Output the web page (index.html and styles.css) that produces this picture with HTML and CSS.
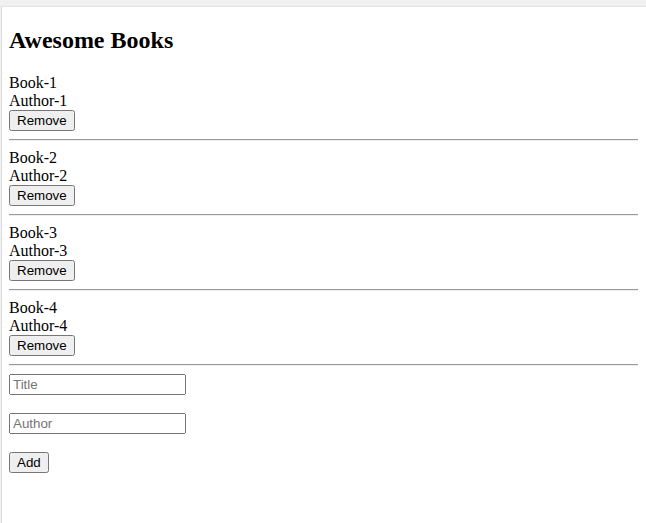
FILE: index.html
```html
<!DOCTYPE html>
<html lang="en">
<head>
<meta charset="utf-8">
<title>Awesome Books</title>
<link rel="stylesheet" href="styles.css">
</head>
<body>
<div class="chrome-bar"></div>
<div class="frame">
  <section class="books">
    <h1 class="title">Awesome Books</h1>
    <div class="list">
      <div class="book">
        <div class="book-title">Book-1</div>
        <div class="book-author">Author-1</div>
        <button class="btn" type="button">Remove</button>
        <hr class="sep">
      </div>
      <div class="book">
        <div class="book-title">Book-2</div>
        <div class="book-author">Author-2</div>
        <button class="btn" type="button">Remove</button>
        <hr class="sep">
      </div>
      <div class="book">
        <div class="book-title">Book-3</div>
        <div class="book-author">Author-3</div>
        <button class="btn" type="button">Remove</button>
        <hr class="sep">
      </div>
      <div class="book">
        <div class="book-title">Book-4</div>
        <div class="book-author">Author-4</div>
        <button class="btn" type="button">Remove</button>
        <hr class="sep">
      </div>
    </div>
    <form class="add-form">
      <input class="field" type="text" placeholder="Title"><br><br>
      <input class="field" type="text" placeholder="Author"><br><br>
      <button class="btn" type="button">Add</button>
    </form>
  </section>
</div>
</body>
</html>
```
FILE: styles.css
```css
html, body {
  margin: 0;
  padding: 0;
  height: 100%;
}
body {
  background: #f1f1f1;
  font-family: "Liberation Serif", "Times New Roman", serif;
  font-size: 16px;
  color: #000;
  display: flex;
  flex-direction: column;
}
.chrome-bar {
  height: 6px;
  background: #f1f1f1;
}
.frame {
  flex: 1;
  background: #fff;
  border-top: 1px solid #e3e3e3;
  border-left: 1px solid #dcdcdc;
  margin-left: 1px;
  padding: 0 8px 8px 7px;
}
.title {
  font-size: 24px;
  font-weight: bold;
  margin: 19.92px 0;
}
.sep {
  margin: 8px 0;
  border: 0;
  border-top: 1px solid #9a9a9a;
  border-bottom: 1px solid #eeeeee;
  height: 0;
}
.btn, .field {
  font-family: "Liberation Sans", Arial, sans-serif;
  font-size: 13.333px;
}
.field {
  box-sizing: border-box;
  width: 177px;
}
.add-form {
  margin: 0;
}
```
